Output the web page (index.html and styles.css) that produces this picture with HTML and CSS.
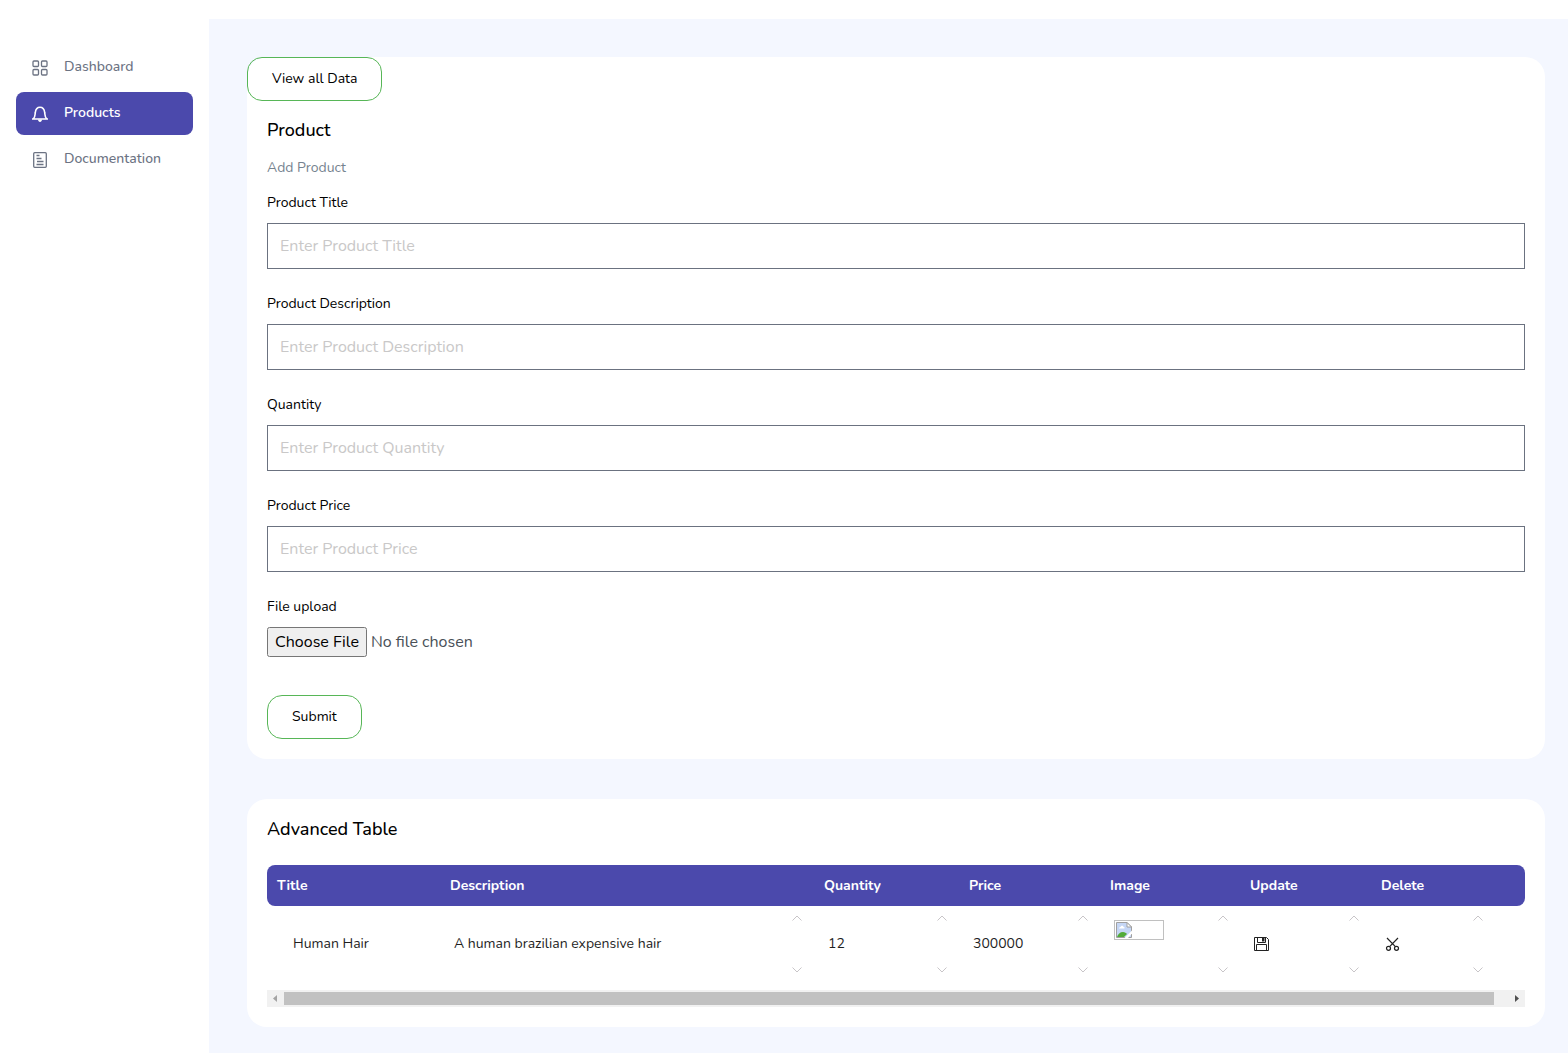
FILE: index.html
```html
<!DOCTYPE html>
<html lang="en">
<head>
<meta charset="utf-8">
<meta name="viewport" content="width=device-width, initial-scale=1">
<title>Products</title>
<link rel="stylesheet" href="styles.css">
</head>
<body>
<svg class="symbols" aria-hidden="true">
  <symbol id="up" viewBox="0 0 10 6"><path d="M0.500 5.500 5 1l4.500 4.500" fill="none" stroke="currentColor"/></symbol>
  <symbol id="down" viewBox="0 0 10 6"><path d="M0.500 .5 5 5l4.500-4.500" fill="none" stroke="currentColor"/></symbol>
</svg>
<div class="layout">
  <nav class="sidebar">
    <a class="nav-link" href="#">
      <svg class="nav-icon" viewBox="0 0 16 16" fill="none" stroke="currentColor" stroke-width="1.3"><rect x="1" y="1" width="5.500" height="5.500" rx="1"/><rect x="9.500" y="1" width="5.500" height="5.500" rx="1"/><rect x="1" y="9.500" width="5.500" height="5.500" rx="1"/><rect x="9.500" y="9.500" width="5.500" height="5.500" rx="1"/></svg>
      <span>Dashboard</span>
    </a>
    <a class="nav-link active" href="#">
      <svg class="nav-icon" viewBox="0 0 16 16" fill="none" stroke="currentColor" stroke-width="1.6"><path d="M0 13h16M1.300 12.800C3.300 11 2.900 9 3.300 6.500 3.700 3.300 5.500 1.300 8 1.300s4.300 2 4.700 5.200c.4 2.500 0 4.500 2 6.300"/><path d="M6 13.500h4c0 3.300-4 3.300-4 0z" fill="currentColor" stroke="none"/></svg>
      <span>Products</span>
    </a>
    <a class="nav-link" href="#">
      <svg class="nav-icon" viewBox="0 0 16 16" fill="none" stroke="currentColor" stroke-width="1.300"><rect x="1.700" y=".7" width="12.600" height="14.600" rx="1"/><path d="M4.500 3.500h3M4.500 6.500h5M5 9.500h6.500M4.500 12.500h7"/></svg>
      <span>Documentation</span>
    </a>
  </nav>
  <main class="content">
    <section class="card">
      <button class="btn" type="button">View all Data</button>
      <form class="card-body product-form">
        <h1 class="card-title">Product</h1>
        <p class="card-subtitle">Add Product</p>
        <div class="field"><label for="title">Product Title</label><input class="text-input" id="title" type="text" placeholder="Enter Product Title"></div>
        <div class="field"><label for="description">Product Description</label><input class="text-input" id="description" type="text" placeholder="Enter Product Description"></div>
        <div class="field"><label for="quantity">Quantity</label><input class="text-input" id="quantity" type="text" placeholder="Enter Product Quantity"></div>
        <div class="field"><label for="price">Product Price</label><input class="text-input" id="price" type="text" placeholder="Enter Product Price"></div>
        <div class="field"><label for="file">File upload</label><input class="file-input" id="file" type="file"></div>
        <button class="btn submit" type="submit">Submit</button>
      </form>
    </section>
    <section class="card table-card">
      <h2 class="card-title">Advanced Table</h2>
      <table class="table">
        <colgroup><col class="c-title"><col class="c-description"><col class="c-quantity"><col class="c-price"><col class="c-image"><col class="c-update"><col class="c-delete"></colgroup>
        <thead><tr><th>Title</th><th>Description</th><th>Quantity</th><th>Price</th><th>Image</th><th>Update</th><th>Delete</th></tr></thead>
        <tbody>
          <tr>
            <td class="first">Human Hair</td>
            <td><div class="cell"><span>A human brazilian expensive hair</span><span class="arrows"><svg><use href="#up"/></svg><svg><use href="#down"/></svg></span></div></td>
            <td><div class="cell"><span>12</span><span class="arrows"><svg><use href="#up"/></svg><svg><use href="#down"/></svg></span></div></td>
            <td><div class="cell"><span>300000</span><span class="arrows"><svg><use href="#up"/></svg><svg><use href="#down"/></svg></span></div></td>
            <td><div class="cell"><span class="thumb"><svg viewBox="0 0 16 16"><path d="M.5.5h10.500l4.500 4.500v10.500H.5z" fill="#c5d6f5" stroke="#a0a0a0"/><path d="M11 .5V5h4.500z" fill="#fff" stroke="#a0a0a0"/><path d="M3 6.500c0-1.500 1.500-1.500 1.500-1.500.5-2 3-1.500 3 0 1.500 0 1.500 1.500.5 1.500z" fill="#fff"/><path d="M1 15c1-3 3-5 6-5 2 0 3 1 4 2l-3 3z" fill="#52ab39"/><path d="M8.500 16 16 8.500v3L12 16z" fill="#fff"/></svg></span><span class="arrows"><svg><use href="#up"/></svg><svg><use href="#down"/></svg></span></div></td>
            <td><div class="cell"><button class="icon-btn" type="button" aria-label="Update"><svg viewBox="0 0 16 16" fill="none" stroke="currentColor"><path d="M.5 1.500h12l2 2v11H.5z"/><path d="M3.500 1.500v5h8v-5M2.500 14.500v-6h10v6"/><path d="M8 2h2.500v3.500H8z" fill="currentColor" stroke="none"/></svg></button><span class="arrows"><svg><use href="#up"/></svg><svg><use href="#down"/></svg></span></div></td>
            <td class="last"><div class="cell"><button class="icon-btn" type="button" aria-label="Delete"><svg viewBox="0 0 16 16" fill="none" stroke="currentColor" stroke-width="1.200"><path d="M2 2l8.400 8.700M13 2l-8.400 8.700"/><circle cx="3.500" cy="12.300" r="2"/><circle cx="11.500" cy="12.300" r="2"/></svg></button><span class="arrows"><svg><use href="#up"/></svg><svg><use href="#down"/></svg></span></div></td>
          </tr>
        </tbody>
      </table>
      <div class="scrollbar" aria-hidden="true">
        <svg class="scroll-left" viewBox="0 0 17 17"><path d="M10 5v7L6 8.500z" fill="currentColor"/></svg>
        <span class="scroll-thumb"></span>
        <svg class="scroll-right" viewBox="0 0 17 17"><path d="M7 5v7l4-3.500z" fill="currentColor"/></svg>
      </div>
    </section>
  </main>
</div>
</body>
</html>
```
FILE: styles.css
```css
* { box-sizing: border-box; }
body {
  margin: 0;
  background: #fff;
  color: #000;
  font: 14px/20px Nunito, Lato, sans-serif;
}
.symbols { display: none; }
.layout { display: flex; min-height: 100vh; padding-top: 19px; }

.sidebar {
  flex: 0 0 209px;
  display: flex;
  flex-direction: column;
  gap: 3px;
  padding: 27px 16px;
}
.nav-link {
  display: flex;
  gap: 16px;
  padding: 11px 16px 12px;
  border-radius: 8px;
  color: #6c7383;
  font-weight: 500;
  text-decoration: none;
}
.nav-link.active { background: #4b49ac; color: #fff; font-weight: 600; }
.nav-icon { width: 16px; height: 16px; margin-top: 3px; }

.content {
  flex: 1;
  display: flex;
  flex-direction: column;
  gap: 40px;
  min-width: 0;
  padding: 38px 23px 26px 38px;
  background: #f4f7ff;
}
.card { background: #fff; border-radius: 20px; }
.btn {
  height: 44px;
  padding: 0 24px;
  border: 1px solid #57b657;
  border-radius: 15px;
  background: transparent;
  color: #000;
  font: inherit;
}
.card > .btn { display: block; }
.card-body { padding: 18px 20px 20px; }
.card-title { margin: 0; font-size: 18px; line-height: 22px; font-weight: 500; }
.card-subtitle { margin: 17px 0 15px; color: #76838f; }
.field { display: flex; flex-direction: column; gap: 10px; margin-bottom: 25px; }
.text-input {
  width: 100%;
  height: 46px;
  padding: 0 12px;
  border: 1px solid #6b7280;
  border-radius: 0;
  background: #fff;
  font: 16px/24px Nunito, Lato, sans-serif;
}
.text-input::placeholder { color: #c9c8c8; }
.file-input { height: 30px; color: #495057; font: 16px/24px Nunito, Lato, sans-serif; }
.file-input::file-selector-button { height: 30px; font: inherit; }
.submit { display: block; margin-top: 38px; }
.field:has(.file-input) { margin-bottom: 0; }

.table-card { padding: 19px 20px 20px; }
.table {
  width: 100%;
  margin-top: 25px;
  border-collapse: separate;
  border-spacing: 0;
  table-layout: fixed;
}
.c-title { width: 173px; }
.c-description { width: 374px; }
.c-quantity { width: 145px; }
.c-price { width: 141px; }
.c-image { width: 140px; }
.c-update { width: 131px; }
.c-delete { width: 154px; }
th {
  height: 41px;
  padding: 0 10px;
  background: #4b49ac;
  color: #fff;
  font-weight: 700;
  text-align: left;
}
th:first-child { border-radius: 8px 0 0 8px; }
th:last-child { border-radius: 0 8px 8px 0; }
td { height: 84px; padding: 0 12px 8px 14px; color: #1f1f1f; }
td.first { padding-left: 26px; }
td.last { padding-right: 42px; }
.cell { display: flex; align-items: center; justify-content: space-between; height: 76px; }
.arrows { display: flex; flex-direction: column; justify-content: space-between; height: 58px; color: #c8c5c8; }
.arrows svg { display: block; width: 10px; height: 6px; }
.thumb {
  align-self: flex-start;
  width: 50px;
  height: 20px;
  margin-top: 14px;
  padding: 1px;
  border: 1px solid #c0c0c0;
}
.thumb svg { display: block; width: 16px; height: 16px; }
.icon-btn { padding: 0; border: 0; background: none; color: #222; }
.icon-btn svg { display: block; width: 16px; height: 16px; }

.scrollbar { display: flex; align-items: center; height: 17px; background: #f1f1f1; }
.scrollbar svg { flex: none; width: 17px; height: 17px; }
.scroll-left { color: #a3a3a3; }
.scroll-right { color: #505050; }
.scroll-thumb { flex: 1; height: 13px; margin-right: 14px; background: #c1c1c1; }
```
